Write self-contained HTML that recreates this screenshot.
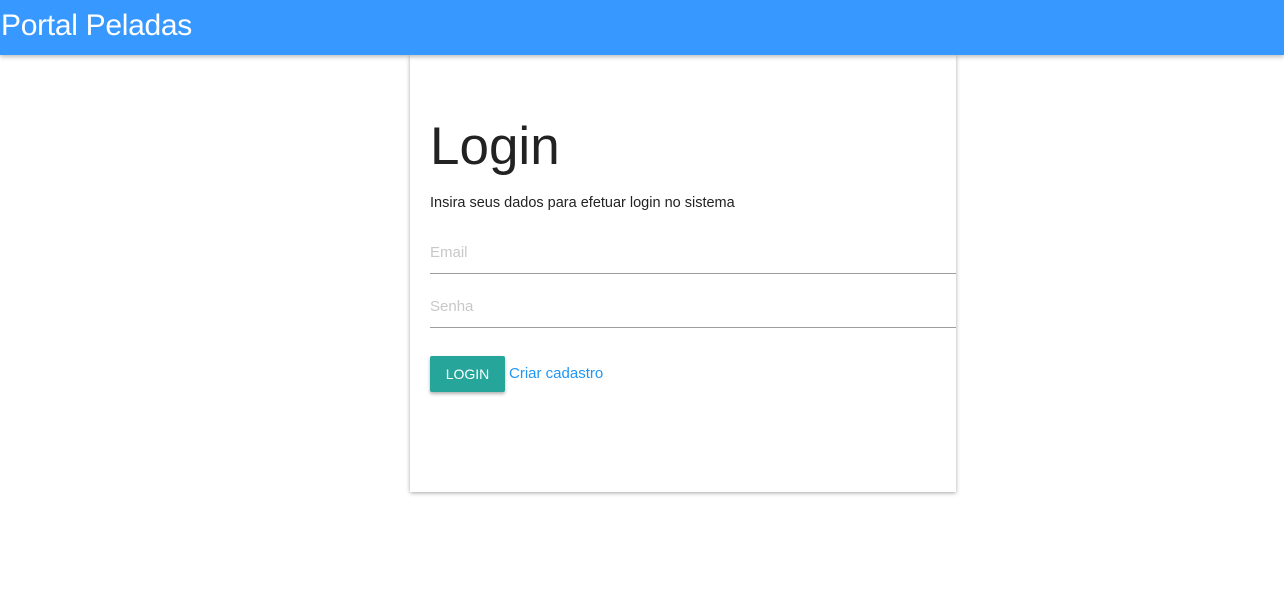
<!DOCTYPE html>
<html><head><style>
body{margin:0;width:1284px;height:609px;background:#fff;font-family:"Liberation Sans",sans-serif;position:relative;overflow:hidden}
.hdr{position:absolute;left:0;top:0;width:1284px;height:55px;background:#3798ff;box-shadow:0 2px 4px rgba(0,0,0,.25);z-index:2}
.hdr span{position:absolute;left:1px;top:9px;font-size:30px;color:#fff;letter-spacing:-0.3px}
.card{position:absolute;left:410px;top:55px;width:546px;height:437px;background:#fff;box-shadow:0 1px 4px rgba(0,0,0,.35)}
h1{position:absolute;left:20px;top:61px;margin:0;font-weight:normal;font-size:53px;color:#222;letter-spacing:0px}
.sub{position:absolute;left:20px;top:140px;font-size:14.5px;color:#222;letter-spacing:0px}
.f{position:absolute;left:20px;width:526px;border-bottom:1px solid #9e9e9e;color:#c8c8c8;font-size:15px}
.btn{position:absolute;left:20px;top:301px;width:75px;height:36px;background:#26a69a;color:#fff;font-size:14px;line-height:36px;text-align:center;border-radius:2px;box-shadow:0 2px 3px rgba(0,0,0,.3)}
.lnk{position:absolute;left:99px;top:310px;font-size:15px;color:#2196f3;letter-spacing:0px}
</style></head><body>
<div class="hdr"><span>Portal Peladas</span></div>
<div class="card">
<div style="position:absolute;left:0;top:0;width:546px;height:437px"></div>
<h1>Login</h1>
<div class="sub">Insira seus dados para efetuar login no sistema</div>
<div class="f" style="top:189px;height:29px">Email</div>
<div class="f" style="top:243px;height:29px">Senha</div>
<div class="btn">LOGIN</div>
<div class="lnk">Criar cadastro</div>
</div>
</body></html>
